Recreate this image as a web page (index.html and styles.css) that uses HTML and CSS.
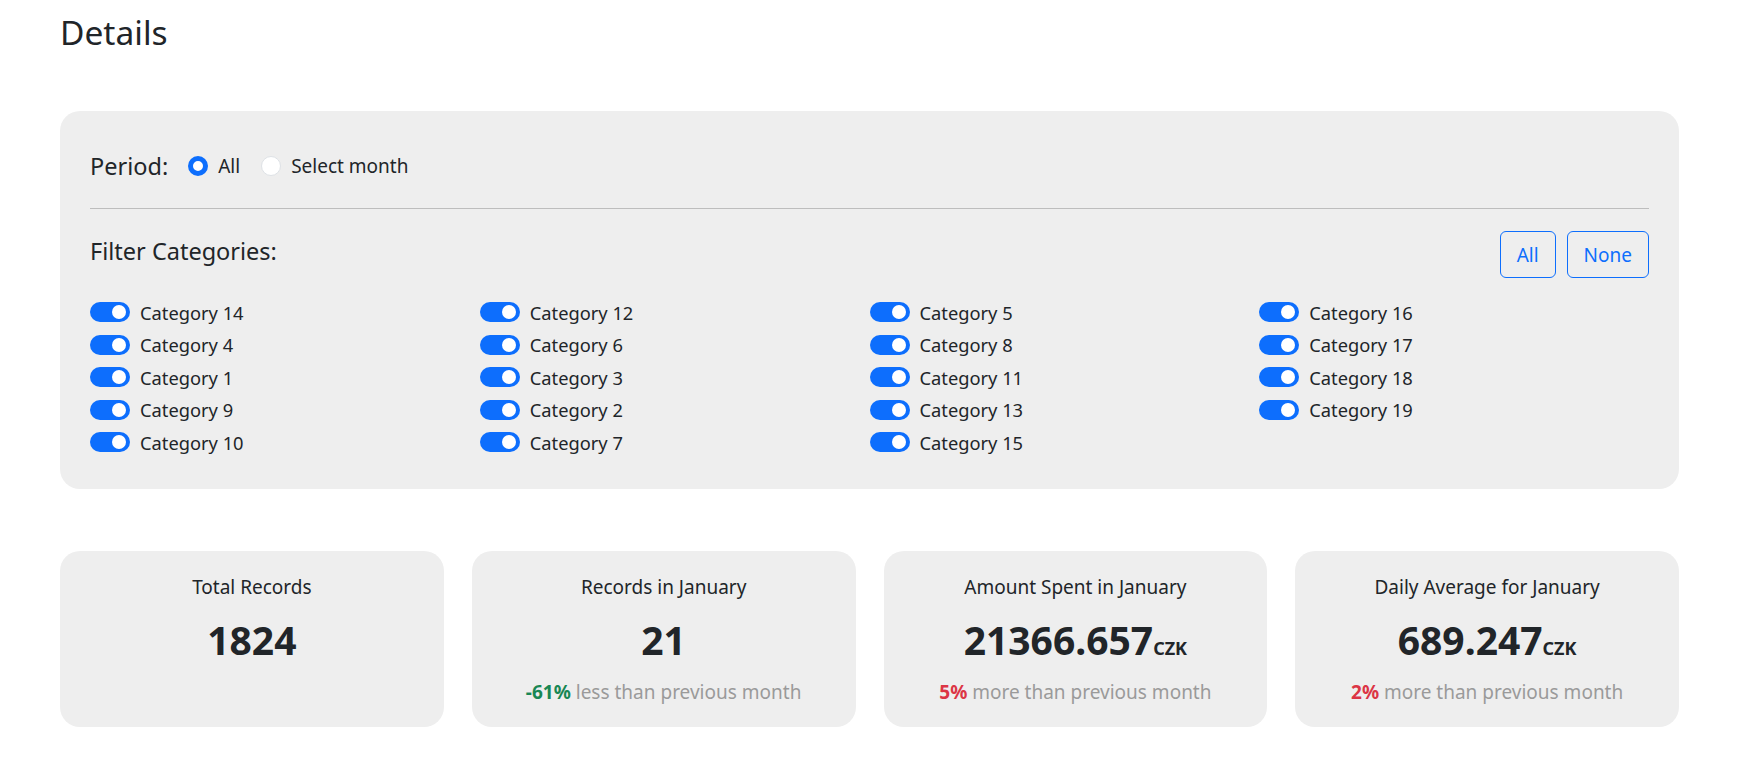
FILE: index.html
```html
<!DOCTYPE html>
<html>
<head>
<meta charset="utf-8">
<link rel="stylesheet" href="styles.css">
</head>
<body>
<div class="page">
  <h2 class="title">Details</h2>
  <section class="panel">
    <div class="period">
      <span class="period-label">Period:</span>
      <label class="radio"><span class="radio-dot checked"></span>All</label>
      <label class="radio"><span class="radio-dot"></span>Select month</label>
    </div>
    <hr class="divider">
    <div class="filter-head">
      <span class="filter-label">Filter Categories:</span>
      <div class="btns">
        <button class="btn">All</button>
        <button class="btn">None</button>
      </div>
    </div>
    <div class="cats">
      <div class="col">
        <label class="cat"><span class="switch"></span>Category 14</label>
        <label class="cat"><span class="switch"></span>Category 4</label>
        <label class="cat"><span class="switch"></span>Category 1</label>
        <label class="cat"><span class="switch"></span>Category 9</label>
        <label class="cat"><span class="switch"></span>Category 10</label>
      </div>
      <div class="col">
        <label class="cat"><span class="switch"></span>Category 12</label>
        <label class="cat"><span class="switch"></span>Category 6</label>
        <label class="cat"><span class="switch"></span>Category 3</label>
        <label class="cat"><span class="switch"></span>Category 2</label>
        <label class="cat"><span class="switch"></span>Category 7</label>
      </div>
      <div class="col">
        <label class="cat"><span class="switch"></span>Category 5</label>
        <label class="cat"><span class="switch"></span>Category 8</label>
        <label class="cat"><span class="switch"></span>Category 11</label>
        <label class="cat"><span class="switch"></span>Category 13</label>
        <label class="cat"><span class="switch"></span>Category 15</label>
      </div>
      <div class="col">
        <label class="cat"><span class="switch"></span>Category 16</label>
        <label class="cat"><span class="switch"></span>Category 17</label>
        <label class="cat"><span class="switch"></span>Category 18</label>
        <label class="cat"><span class="switch"></span>Category 19</label>
      </div>
    </div>
  </section>
  <section class="stats">
    <div class="card">
      <div class="card-title">Total Records</div>
      <div class="card-num">1824</div>
    </div>
    <div class="card">
      <div class="card-title">Records in January</div>
      <div class="card-num">21</div>
      <div class="card-sub"><b class="good">-61%</b> less than previous month</div>
    </div>
    <div class="card">
      <div class="card-title">Amount Spent in January</div>
      <div class="card-num">21366.657<span class="cur">CZK</span></div>
      <div class="card-sub"><b class="bad">5%</b> more than previous month</div>
    </div>
    <div class="card">
      <div class="card-title">Daily Average for January</div>
      <div class="card-num">689.247<span class="cur">CZK</span></div>
      <div class="card-sub"><b class="bad">2%</b> more than previous month</div>
    </div>
  </section>
</div>
</body>
</html>
```
FILE: styles.css
```css
* { box-sizing: border-box; }
body {
  margin: 0;
  font-family: "Noto Sans", "Open Sans", sans-serif;
  color: #212529;
  background: #fff;
}
.page {
  padding: 0 61px 0 60px;
}
.title {
  font-size: 33.5px;
  font-weight: 400;
  line-height: 40px;
  margin: 12px 0 59px;
}
.panel {
  background: #eeeeee;
  border-radius: 20px;
  padding: 40px 30px 30px;
}
.period {
  display: flex;
  align-items: center;
  height: 30px;
}
.period-label {
  font-size: 23.5px;
  margin-right: 20px;
}
.radio {
  display: flex;
  align-items: center;
  font-size: 19px;
  margin-right: 21px;
}
.radio-dot {
  width: 20px;
  height: 20px;
  border-radius: 50%;
  background: #fff;
  border: 1px solid #dee2e6;
  margin-right: 10px;
}
.radio-dot.checked {
  background: #fff;
  border: 5.5px solid #0d6efd;
}
.divider {
  border: 0;
  border-top: 1px solid #bdbdbd;
  margin: 27px 0 22px;
}
.filter-head {
  display: flex;
  justify-content: space-between;
  align-items: flex-start;
}
.filter-label {
  font-size: 23.5px;
  line-height: 30px;
  margin-top: 5px;
}
.btns {
  display: flex;
  gap: 11px;
}
.btn {
  font-family: inherit;
  font-size: 19px;
  color: #0d6efd;
  background: transparent;
  border: 1px solid #0d6efd;
  border-radius: 6px;
  height: 47px;
  padding: 0 16px;
}
.cats {
  display: grid;
  grid-template-columns: repeat(4, 1fr);
  margin-top: 18px;
}
.col {
  display: flex;
  flex-direction: column;
}
.cat {
  display: flex;
  align-items: center;
  height: 32.5px;
  font-size: 18.3px;
}
.switch {
  position: relative;
  width: 40px;
  height: 20px;
  border-radius: 10px;
  background: #0d6efd;
  margin-right: 10px;
}
.switch::after {
  content: "";
  position: absolute;
  right: 4px;
  top: 3px;
  width: 14px;
  height: 14px;
  border-radius: 50%;
  background: #fff;
}
.stats {
  display: grid;
  grid-template-columns: repeat(4, 1fr);
  gap: 28px;
  margin-top: 62px;
}
.card {
  background: #eeeeee;
  border-radius: 20px;
  height: 176px;
  padding-top: 24px;
  text-align: center;
}
.card-title {
  font-size: 19px;
  line-height: 24px;
}
.card-num {
  font-size: 39px;
  font-weight: 700;
  line-height: 48px;
  margin-top: 17px;
}
.cur {
  font-size: 18px;
  line-height: 1;
}
.card-sub {
  font-size: 19px;
  line-height: 24px;
  margin-top: 16px;
  color: #9a9a9a;
}
.good { color: #198754; }
.bad { color: #dc3545; }
```
